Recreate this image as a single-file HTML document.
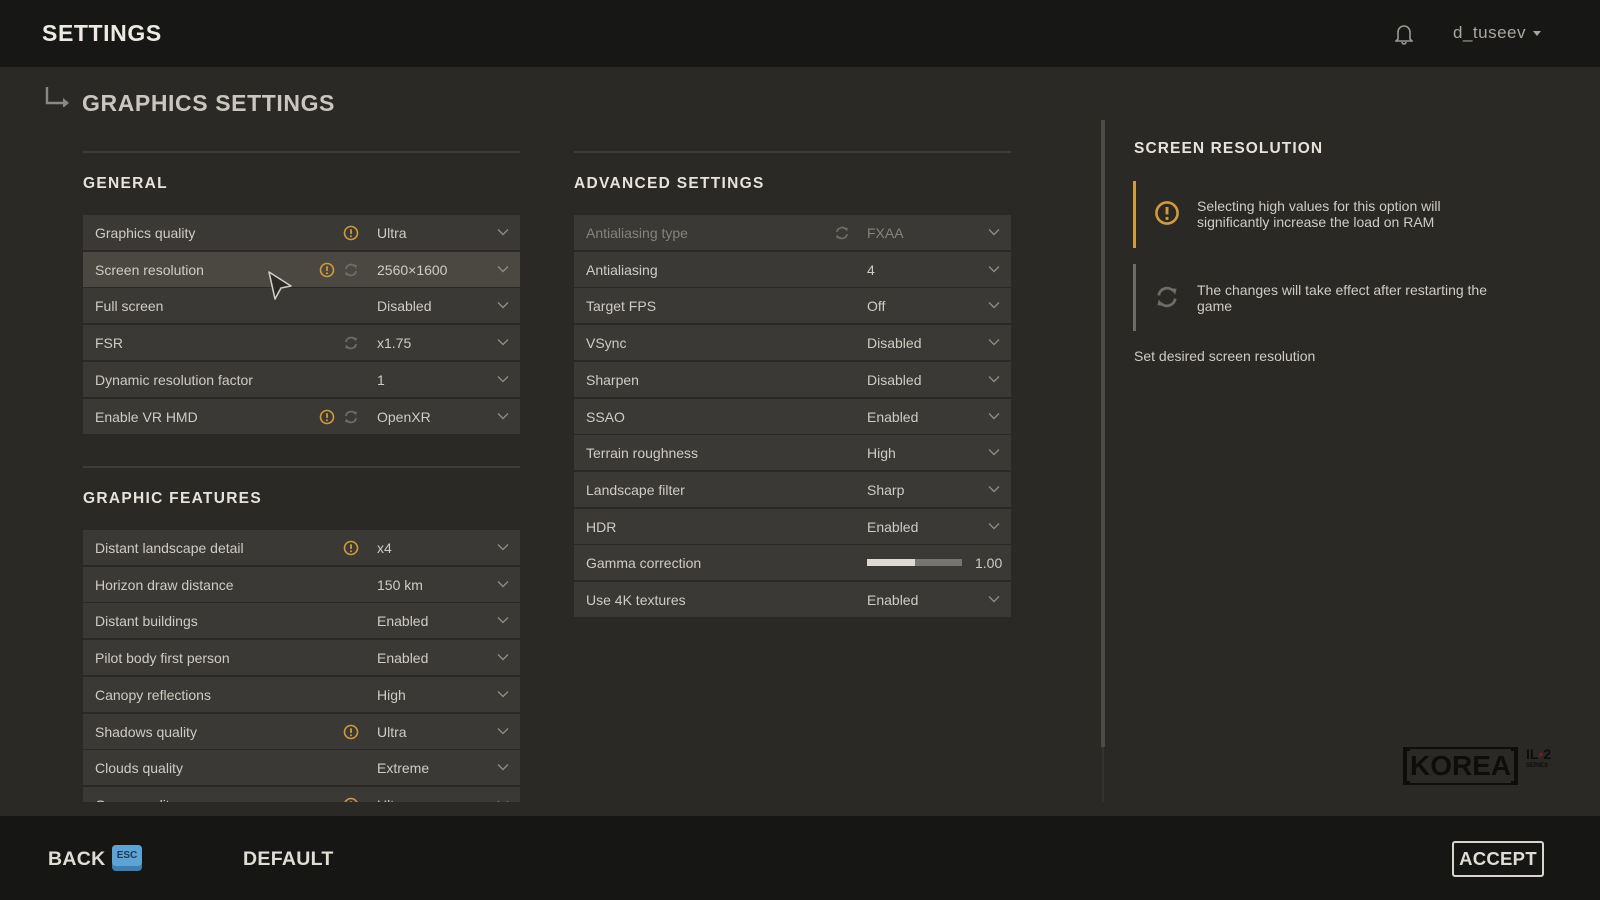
<!DOCTYPE html>
<html><head><meta charset="utf-8"><style>
*{margin:0;padding:0;box-sizing:border-box}
body{width:1600px;height:900px;overflow:hidden;background:#2a2926;font-family:"Liberation Sans",sans-serif;position:relative;color:#d6d3ca}
.hdr{position:absolute;left:0;top:0;width:1600px;height:67px;background:#171715}
.ftr{position:absolute;left:0;top:816px;width:1600px;height:84px;background:#161614}
.abs{position:absolute}
.h1{font-weight:bold;font-size:23px;letter-spacing:.6px;color:#eceae2}
.h2{font-weight:bold;font-size:15.5px;letter-spacing:1.3px;color:#e6e3da}
.line{position:absolute;height:2px;background:#3d3c38}
.rows{position:absolute}
.row{position:relative;height:35px;margin-bottom:1.73px;background:#3a3935;font-size:14px;color:#cfccc3}
.row.hl{background:#4a4840}
.row.dim{color:#85837c}
.row .l{position:absolute;left:12px;top:10px}
.row .v{position:absolute;top:10px}
.row svg.ch{position:absolute;top:13px}
.row .ic{position:absolute;top:10px}
.clip{position:absolute;overflow:hidden}
.btn{font-weight:bold;font-size:19.5px;letter-spacing:.3px;color:#e0ddd4}
</style></head><body>
<div class="hdr"></div>
<div class="abs h1" style="left:42px;top:20px">SETTINGS</div>
<svg class="abs" style="left:1395px;top:23px" width="18" height="22" viewBox="0 0 18 22"><path d="M3 16V9a6 6 0 0 1 12 0v7l2 2H1z" fill="none" stroke="#9a9890" stroke-width="1.6"/><path d="M7 19a2 2 0 0 0 4 0" fill="none" stroke="#9a9890" stroke-width="1.6"/></svg>
<div class="abs" style="left:1453px;top:23px;font-size:17px;color:#aaa79f;letter-spacing:.5px">d_tuseev</div>
<svg class="abs" style="left:1533px;top:31px" width="8" height="5"><path d="M0 0h8L4 5z" fill="#aaa79f"/></svg>

<svg class="abs" style="left:45px;top:87px" width="26" height="20"><path d="M2 0v16h18" fill="none" stroke="#8a887f" stroke-width="2.4"/><path d="M18 11l6 5-6 5z" fill="#8a887f"/></svg>
<div class="abs h1" style="left:82px;top:90px;color:#c9c6bd">GRAPHICS SETTINGS</div>

<div class="line" style="left:83px;top:151px;width:437px"></div>
<div class="abs h2" style="left:83px;top:175px">GENERAL</div>
<div class="line" style="left:574px;top:151px;width:437px"></div>
<div class="abs h2" style="left:574px;top:175px">ADVANCED SETTINGS</div>

<svg width="0" height="0" style="position:absolute">
<defs>
<symbol id="w" viewBox="0 0 16 16"><circle cx="8" cy="8" r="6.5" fill="none" stroke="#d39a3c" stroke-width="1.6"/><path d="M8 4.3v4.6" stroke="#d39a3c" stroke-width="1.8"/><circle cx="8" cy="11.3" r="1" fill="#d39a3c"/></symbol>
<symbol id="r" viewBox="0 0 16 16"><path d="M2.9 7A5.2 5.2 0 0 1 12 4.4" fill="none" stroke="#6f6d67" stroke-width="1.7"/><path d="M13.1 9A5.2 5.2 0 0 1 4 11.6" fill="none" stroke="#6f6d67" stroke-width="1.7"/><path d="M10.3 2.6l3.6.3-.9 3.6zM5.7 13.4l-3.6-.3.9-3.6z" fill="#6f6d67"/></symbol>
<symbol id="c" viewBox="0 0 12 8"><path d="M1 1.5l5 5 5-5" fill="none" stroke="#8d8b84" stroke-width="1.4"/></symbol>
</defs></svg>

<!-- General -->
<div class="rows" style="left:83px;top:215px;width:437px">
<div class="row"><span class="l">Graphics quality</span><svg class="ic" style="left:260px" width="16" height="16"><use href="#w"/></svg><span class="v" style="left:294px">Ultra</span><svg class="ch" style="left:414px" width="12" height="8"><use href="#c"/></svg></div>
<div class="row hl"><span class="l">Screen resolution</span><svg class="ic" style="left:236px" width="16" height="16"><use href="#w"/></svg><svg class="ic" style="left:260px" width="16" height="16"><use href="#r"/></svg><span class="v" style="left:294px">2560×1600</span><svg class="ch" style="left:414px" width="12" height="8"><use href="#c"/></svg></div>
<div class="row"><span class="l">Full screen</span><span class="v" style="left:294px">Disabled</span><svg class="ch" style="left:414px" width="12" height="8"><use href="#c"/></svg></div>
<div class="row"><span class="l">FSR</span><svg class="ic" style="left:260px" width="16" height="16"><use href="#r"/></svg><span class="v" style="left:294px">x1.75</span><svg class="ch" style="left:414px" width="12" height="8"><use href="#c"/></svg></div>
<div class="row"><span class="l">Dynamic resolution factor</span><span class="v" style="left:294px">1</span><svg class="ch" style="left:414px" width="12" height="8"><use href="#c"/></svg></div>
<div class="row"><span class="l">Enable VR HMD</span><svg class="ic" style="left:236px" width="16" height="16"><use href="#w"/></svg><svg class="ic" style="left:260px" width="16" height="16"><use href="#r"/></svg><span class="v" style="left:294px">OpenXR</span><svg class="ch" style="left:414px" width="12" height="8"><use href="#c"/></svg></div>
</div>
<svg class="abs" style="left:266px;top:270px" width="28" height="32"><path d="M3 2l22 14-10 2-6 11z" fill="#2a2926" stroke="#cfccc3" stroke-width="1.6" stroke-linejoin="round"/></svg>

<div class="line" style="left:83px;top:466px;width:437px"></div>
<div class="abs h2" style="left:83px;top:490px">GRAPHIC FEATURES</div>

<div class="clip" style="left:83px;top:530px;width:437px;height:272px">
<div class="rows" style="left:0;top:0;width:437px">
<div class="row"><span class="l">Distant landscape detail</span><svg class="ic" style="left:260px" width="16" height="16"><use href="#w"/></svg><span class="v" style="left:294px">x4</span><svg class="ch" style="left:414px" width="12" height="8"><use href="#c"/></svg></div>
<div class="row"><span class="l">Horizon draw distance</span><span class="v" style="left:294px">150 km</span><svg class="ch" style="left:414px" width="12" height="8"><use href="#c"/></svg></div>
<div class="row"><span class="l">Distant buildings</span><span class="v" style="left:294px">Enabled</span><svg class="ch" style="left:414px" width="12" height="8"><use href="#c"/></svg></div>
<div class="row"><span class="l">Pilot body first person</span><span class="v" style="left:294px">Enabled</span><svg class="ch" style="left:414px" width="12" height="8"><use href="#c"/></svg></div>
<div class="row"><span class="l">Canopy reflections</span><span class="v" style="left:294px">High</span><svg class="ch" style="left:414px" width="12" height="8"><use href="#c"/></svg></div>
<div class="row"><span class="l">Shadows quality</span><svg class="ic" style="left:260px" width="16" height="16"><use href="#w"/></svg><span class="v" style="left:294px">Ultra</span><svg class="ch" style="left:414px" width="12" height="8"><use href="#c"/></svg></div>
<div class="row"><span class="l">Clouds quality</span><span class="v" style="left:294px">Extreme</span><svg class="ch" style="left:414px" width="12" height="8"><use href="#c"/></svg></div>
<div class="row"><span class="l">Grass quality</span><svg class="ic" style="left:260px" width="16" height="16"><use href="#w"/></svg><span class="v" style="left:294px">Ultra</span><svg class="ch" style="left:414px" width="12" height="8"><use href="#c"/></svg></div>
</div></div>

<!-- Advanced -->
<div class="rows" style="left:574px;top:215px;width:437px">
<div class="row dim"><span class="l">Antialiasing type</span><svg class="ic" style="left:260px" width="16" height="16"><use href="#r"/></svg><span class="v" style="left:293px">FXAA</span><svg class="ch" style="left:414px" width="12" height="8"><use href="#c"/></svg></div>
<div class="row"><span class="l">Antialiasing</span><span class="v" style="left:293px">4</span><svg class="ch" style="left:414px" width="12" height="8"><use href="#c"/></svg></div>
<div class="row"><span class="l">Target FPS</span><span class="v" style="left:293px">Off</span><svg class="ch" style="left:414px" width="12" height="8"><use href="#c"/></svg></div>
<div class="row"><span class="l">VSync</span><span class="v" style="left:293px">Disabled</span><svg class="ch" style="left:414px" width="12" height="8"><use href="#c"/></svg></div>
<div class="row"><span class="l">Sharpen</span><span class="v" style="left:293px">Disabled</span><svg class="ch" style="left:414px" width="12" height="8"><use href="#c"/></svg></div>
<div class="row"><span class="l">SSAO</span><span class="v" style="left:293px">Enabled</span><svg class="ch" style="left:414px" width="12" height="8"><use href="#c"/></svg></div>
<div class="row"><span class="l">Terrain roughness</span><span class="v" style="left:293px">High</span><svg class="ch" style="left:414px" width="12" height="8"><use href="#c"/></svg></div>
<div class="row"><span class="l">Landscape filter</span><span class="v" style="left:293px">Sharp</span><svg class="ch" style="left:414px" width="12" height="8"><use href="#c"/></svg></div>
<div class="row"><span class="l">HDR</span><span class="v" style="left:293px">Enabled</span><svg class="ch" style="left:414px" width="12" height="8"><use href="#c"/></svg></div>
<div class="row"><span class="l">Gamma correction</span><div class="abs" style="left:293px;top:14px;width:95px;height:7px;background:#77756f"><div style="width:48px;height:7px;background:#dedad2"></div></div><span class="v" style="left:401px">1.00</span></div>
<div class="row"><span class="l">Use 4K textures</span><span class="v" style="left:293px">Enabled</span><svg class="ch" style="left:414px" width="12" height="8"><use href="#c"/></svg></div>
</div>

<div class="abs" style="left:1101px;top:120px;width:4px;height:627px;background:#4c4b46"></div>
<div class="abs" style="left:1102px;top:747px;width:2px;height:55px;background:#34332f"></div>

<div class="abs h2" style="left:1134px;top:140px;letter-spacing:1.1px">SCREEN RESOLUTION</div>
<div class="abs" style="left:1133px;top:181px;width:3px;height:67px;background:#d09a43"></div>
<svg class="abs" style="left:1154px;top:200px" width="26" height="26" viewBox="0 0 16 16"><use href="#w"/></svg>
<div class="abs" style="left:1197px;top:198px;font-size:14px;line-height:16px;color:#cfccc3">Selecting high values for this option will<br>significantly increase the load on RAM</div>
<div class="abs" style="left:1133px;top:264px;width:3px;height:67px;background:#6e6c66"></div>
<svg class="abs" style="left:1154px;top:284px" width="26" height="26" viewBox="0 0 16 16"><use href="#r"/></svg>
<div class="abs" style="left:1197px;top:282px;font-size:14px;line-height:16px;color:#cfccc3">The changes will take effect after restarting the<br>game</div>
<div class="abs" style="left:1134px;top:348px;font-size:14px;color:#cfccc3">Set desired screen resolution</div>

<div class="abs" style="left:1403px;top:747px;width:115px;height:38px;border:4px solid #0d0d0c"></div>
<div class="abs" style="left:1410px;top:749px;font-weight:bold;font-size:28px;color:#0d0d0c;background:#2a2926;line-height:34px">KOREA</div>
<div class="abs" style="left:1526px;top:746px;font-weight:bold;font-size:14px;color:#0d0d0c">IL<span style="color:#7a1a1a">•</span>2</div>
<div class="abs" style="left:1526px;top:763px;font-weight:bold;font-size:6px;color:#0d0d0c">SERIES</div>

<div class="ftr"></div>
<div class="abs btn" style="left:48px;top:848px">BACK</div>
<div class="abs" style="left:112px;top:845px;width:30px;height:26px;background:#3e7fb0;border-radius:4px"></div>
<div class="abs" style="left:112px;top:845px;width:30px;height:21px;background:#5ea3d6;border-radius:4px;font-weight:bold;font-size:10px;color:#1d3a52;text-align:center;line-height:21px">ESC</div>
<div class="abs btn" style="left:243px;top:848px">DEFAULT</div>
<div class="abs" style="left:1452px;top:841px;width:92px;height:36px;border:2px solid #d8d5cc;border-radius:3px"></div>
<div class="abs btn" style="left:1452px;top:848px;width:92px;text-align:center;font-size:18.5px">ACCEPT</div>
</body></html>
